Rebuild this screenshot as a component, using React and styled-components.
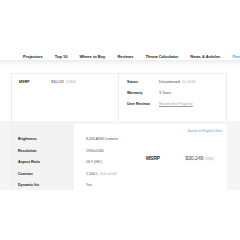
import React from 'react';
import styled, { createGlobalStyle } from 'styled-components';

const GlobalStyle = createGlobalStyle`
  html, body { margin: 0; padding: 0; background: #fff; }
  body { font-family: "Liberation Sans", Arial, sans-serif; color: #222; }
`;

const Page = styled.div`
  width: 240px; height: 240px;
  overflow: hidden;
  background: #fff;
`;

const Header = styled.header`
  height: 60px;
  display: flex;
  align-items: flex-end;
`;

const Nav = styled.nav`
  display: flex;
  gap: 12.1px;
  padding: 0 0 1px 23px;
  height: 6px;
  align-items: center;
  white-space: nowrap;
`;

const NavItem = styled.span`
  font-size: 4.1px;
  font-weight: bold;
  color: ${(p) => (p.$accent ? '#3a9ee4' : '#222')};
  letter-spacing: -0.05px;
`;

const Shade = styled.div`
  height: 6px;
  background: linear-gradient(#ececec, #f8f8f8 60%, #fff);
`;

const Wrap = styled.div`
  padding: 7px 13px 0 11px;
`;

const SummaryCard = styled.section`
  display: grid;
  grid-template-columns: 106px 1fr;
  height: 48px;
  border: 1px solid #ececec;
  border-bottom: none;
  box-sizing: border-box;
`;

const Col = styled.div`
  padding: ${(p) => p.$pad};
  border-left: ${(p) => (p.$divider ? '1px solid #ececec' : 'none')};
  display: flex;
  flex-direction: column;
  gap: 6.5px;
`;

const Line = styled.div`
  display: grid;
  grid-template-columns: ${(p) => p.$cols};
  align-items: center;
  height: 4.5px;
  font-size: 3.6px;
  white-space: nowrap;
`;

const Key = styled.span`
  font-weight: bold;
  color: #222;
`;

const Val = styled.span`
  color: #444;
`;

const Faint = styled.span`
  color: #aaa;
  margin-left: 2px;
`;

const LinkText = styled.span`
  color: #9a9a9a;
  text-decoration: underline;
`;

const SpecBand = styled.section`
  background: #f5f5f5;
  margin: 0 -13px 0 -11px;
  padding: 0 13px 0 11px;
  height: 69px;
`;

const SpecGrid = styled.div`
  display: grid;
  grid-template-columns: 63px 1fr;
  height: 100%;
`;

const Labels = styled.div`
  border-left: 1px solid #ececec;
  background: #f3f3f3;
  padding: 16px 0 0 6px;
  display: flex;
  flex-direction: column;
  gap: 7px;
`;

const Values = styled.div`
  background: #fff;
  margin-top: 3px;
  display: grid;
  grid-template-columns: 60px 1fr;
`;

const ValueList = styled.div`
  padding: 13px 0 0 12px;
  display: flex;
  flex-direction: column;
  gap: 7px;
`;

const Cell = styled.div`
  height: 4.5px;
  font-size: 3.6px;
  line-height: 4.5px;
  white-space: nowrap;
  font-weight: ${(p) => (p.$bold ? 'bold' : 'normal')};
  color: ${(p) => (p.$bold ? '#222' : '#555')};
`;

const PricePanel = styled.div`
  display: flex;
  flex-direction: column;
  align-items: flex-end;
  padding: 5px 5px 0 0;
`;

const Switch = styled.span`
  font-size: 3.4px;
  color: #4aa3df;
  white-space: nowrap;
`;

const BigPrice = styled.div`
  margin-top: 22px;
  align-self: flex-start;
  display: flex;
  align-items: baseline;
  gap: 23px;
  white-space: nowrap;
  margin-left: 12px;
`;

const BigKey = styled.span`
  font-size: 6px;
  font-weight: bold;
  color: #333;
  letter-spacing: -0.3px;
  transform: scaleX(0.85);
  transform-origin: left;
`;

const BigVal = styled.span`
  font-size: 5.6px;
  color: #555;
  letter-spacing: -0.3px;
  span { font-size: 3.8px; color: #aaa; margin-left: 1.5px; }
`;

const navItems = ['Projectors', 'Top 10', 'Where to Buy', 'Reviews', 'Throw Calculator', 'News & Articles'];

const specs = [
  ['Brightness', '8,200 ANSI Lumens'],
  ['Resolution', '1920x1080'],
  ['Aspect Ratio', '16:9 (HD)'],
  ['Contrast', '2,500:1', '(full on/off)'],
  ['Dynamic Iris', 'Yes'],
];

export default function App() {
  return (
    <Page>
      <GlobalStyle />
      <Header>
        <Nav>
          {navItems.map((n) => <NavItem key={n}>{n}</NavItem>)}
          <NavItem $accent>Find</NavItem>
        </Nav>
      </Header>
      <Shade />
      <Wrap>
        <SummaryCard>
          <Col $pad="6px 0 0 7px">
            <Line $cols="32px 1fr">
              <Key>MSRP</Key>
              <Val>$30,249<Faint>(USD)</Faint></Val>
            </Line>
          </Col>
          <Col $divider $pad="6px 0 0 8px">
            <Line $cols="32px 1fr">
              <Key>Status</Key>
              <Val>Discontinued<Faint>Jul 2018</Faint></Val>
            </Line>
            <Line $cols="32px 1fr">
              <Key>Warranty</Key>
              <Val>3 Years</Val>
            </Line>
            <Line $cols="32px 1fr">
              <Key>User Reviews</Key>
              <LinkText>Review this Projector</LinkText>
            </Line>
          </Col>
        </SummaryCard>
        <SpecBand>
          <SpecGrid>
            <Labels>
              {specs.map((s) => <Cell $bold key={s[0]}>{s[0]}</Cell>)}
            </Labels>
            <Values>
              <ValueList>
                {specs.map((s) => (
                  <Cell key={s[0]}>{s[1]}{s[2] && <Faint>{s[2]}</Faint>}</Cell>
                ))}
              </ValueList>
              <PricePanel>
                <Switch>Switch to English Units</Switch>
                <BigPrice>
                  <BigKey>MSRP</BigKey>
                  <BigVal>$30,249<span>(USD)</span></BigVal>
                </BigPrice>
              </PricePanel>
            </Values>
          </SpecGrid>
        </SpecBand>
      </Wrap>
    </Page>
  );
}
